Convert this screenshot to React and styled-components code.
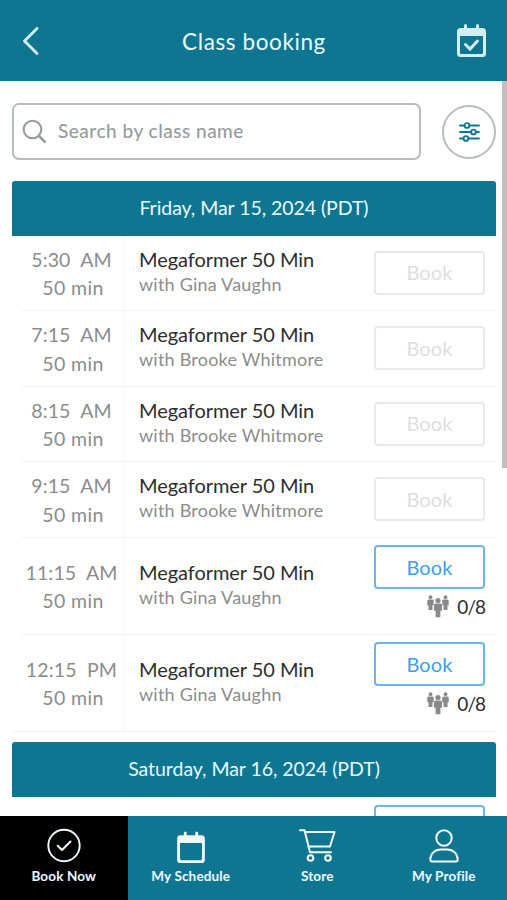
import styled, { createGlobalStyle } from "styled-components";

const GlobalStyle = createGlobalStyle`
  :root {
    --cl-teal: #0f7692;
    --cl-ice: #d3eff5;
    --cl-blue: #3d9fe6;
    --cl-light-blue: #6bb5ec;
    --cl-dark: #2d2d2d;
    --cl-gray: #8c8c8c;
    --cl-line: #eff2f3;
  }

  * {
    box-sizing: border-box;
  }

  body {
    margin: 0;
    background: #fff;
    font-family: Lato, "Open Sans", sans-serif;
    overflow: hidden;
  }
`;

const Screen = styled.div`
  position: relative;
  display: flex;
  flex-direction: column;
  height: 900px;
  overflow: hidden;
`;

const Header = styled.header`
  display: grid;
  grid-template-columns: 62px 1fr 62px;
  align-items: center;
  flex: none;
  height: 81px;
  padding-top: 1px;
  background: var(--cl-teal);
  color: var(--cl-ice);
`;

const HeaderButton = styled.button`
  display: flex;
  justify-content: ${(props) => (props.$end ? "flex-end" : "flex-start")};
  padding: ${(props) => (props.$end ? "0 21px 2px 0" : "0 0 0 22px")};
  border: 0;
  background: none;
  color: inherit;
`;

const Title = styled.h1`
  margin: 0;
  padding: 2px 0 0 1px;
  color: #e9fbff;
  font-size: 22.5px;
  font-weight: 400;
  letter-spacing: 0.6px;
  line-height: 28px;
  text-align: center;
`;

const Content = styled.main`
  flex: 1;
  min-height: 0;
  padding: 22px 11px 0 12px;
  overflow: hidden;
`;

const SearchBar = styled.div`
  display: flex;
  align-items: center;
  justify-content: space-between;
  height: 57px;
  margin-bottom: 21px;
`;

const SearchField = styled.label`
  display: flex;
  align-items: center;
  gap: 11px;
  width: 409px;
  height: 57px;
  padding: 0 8px;
  border: 2px solid #b7bcbd;
  border-radius: 7px;
  color: #969b9d;
`;

const SearchInput = styled.input`
  flex: 1;
  padding: 0 0 2px;
  border: 0;
  outline: 0;
  background: none;
  font-family: inherit;
  font-size: 19px;
  font-weight: 500;
  letter-spacing: 0.5px;

  &::placeholder {
    color: #969b9d;
    opacity: 1;
  }
`;

const FilterButton = styled.button`
  display: flex;
  align-items: center;
  justify-content: center;
  width: 54px;
  height: 54px;
  padding: 0;
  border: 2px solid #b7bcbd;
  border-radius: 50%;
  background: #fff;
  color: var(--cl-teal);
`;

const Day = styled.section`
  margin-bottom: 10.5px;
`;

const DayTitle = styled.h2`
  margin: 0;
  height: 54.5px;
  border-radius: 3px 3px 0 0;
  background: var(--cl-teal);
  color: #e9fbff;
  font-size: 19.5px;
  font-weight: 400;
  letter-spacing: -0.05px;
  line-height: 53px;
  text-align: center;
`;

const Row = styled.article`
  display: grid;
  grid-template-columns: 103px 1fr 122px;
  height: ${(props) => (props.$open ? "97px" : "75.5px")};
  margin-left: 10px;
  border-bottom: 1px solid var(--cl-line);

  &:last-child {
    margin-left: 0;
    padding-left: 10px;
  }
`;

const Time = styled.div`
  display: flex;
  flex-direction: column;
  justify-content: center;
  border-right: 1px solid #f4f7f8;
  padding: 3px 3px 0 0;
  color: var(--cl-gray);
  font-size: 19.5px;
  letter-spacing: 0.15px;
  line-height: 28.5px;
  text-align: center;
  white-space: pre;
`;

const Duration = styled.span`
  padding-left: 3px;
  letter-spacing: 0.35px;
`;

const Info = styled.div`
  display: flex;
  flex-direction: column;
  justify-content: center;
  padding: 0 0 2px 14px;
`;

const ClassName = styled.h3`
  margin: 0;
  color: var(--cl-dark);
  font-size: 20px;
  font-weight: 400;
  letter-spacing: -0.05px;
  line-height: 25px;
`;

const Instructor = styled.p`
  margin: 0;
  color: var(--cl-gray);
  font-size: 18px;
  letter-spacing: 0.22px;
  line-height: 25px;
`;

const Booking = styled.div`
  display: flex;
  flex-direction: column;
  align-items: flex-end;
  justify-content: center;
  padding: ${(props) => (props.$open ? "0 11px 3px 0" : "0 11px 0 0")};
`;

const BookButton = styled.button`
  flex: none;
  width: 111px;
  height: 44px;
  padding: 0 0 1px;
  border: 2px solid var(--cl-light-blue);
  border-radius: 4px;
  background: #fff;
  color: var(--cl-blue);
  font-family: inherit;
  font-size: 20px;
  letter-spacing: 0.15px;

  &:disabled {
    border-color: #e9e9e9;
    color: #dedede;
  }
`;

const Spots = styled.div`
  display: flex;
  align-items: center;
  gap: 8px;
  height: 34px;
  color: var(--cl-dark);
  font-size: 19px;
  letter-spacing: -1px;
`;

const ScrollThumb = styled.div`
  position: absolute;
  top: 81px;
  right: 0;
  width: 5px;
  height: 387px;
  background: #bfbfbf;
`;

const TabBar = styled.nav`
  display: grid;
  grid-template-columns: 127.5px 126.5px 126.5px 126.5px;
  flex: none;
  height: 84.5px;
  background: var(--cl-teal);
`;

const Tab = styled.button`
  display: flex;
  flex-direction: column;
  align-items: center;
  padding: 11px 0 0;
  border: 0;
  background: ${(props) => (props.$active ? "#000" : "none")};
  color: #f0fcff;
  font-family: inherit;
  font-size: 13.5px;
  font-weight: 700;
  letter-spacing: 0.15px;
  line-height: 20px;

  svg {
    margin-bottom: 3px;
  }
`;

const BackIcon = () => (
  <svg width="18" height="28" viewBox="0 0 18 28" fill="none">
    <path
      d="M15 1.5 2.5 14 15 26.5"
      stroke="currentColor"
      strokeWidth="2.9"
      strokeLinecap="round"
      strokeLinejoin="round"
    />
  </svg>
);

const CalendarIcon = ({ checked, width = 29, height = 33 }) => (
  <svg width={width} height={height} viewBox="0 0 29 33">
    <path
      d="M7 1.5a1.5 1.5 0 0 1 3 0V4h9V1.5a1.5 1.5 0 0 1 3 0V4h3.5A3.5 3.5 0 0 1 29 7.5v22a3.5 3.5 0 0 1-3.5 3.5h-22A3.5 3.5 0 0 1 0 29.5v-22A3.5 3.5 0 0 1 3.5 4H7ZM3 12v16.5A1.5 1.5 0 0 0 4.5 30h20a1.5 1.5 0 0 0 1.5-1.5V12Z"
      fill="currentColor"
      fillRule="evenodd"
    />
    {checked && (
      <path
        d="m8.5 20.500 4.500 4.500 7.500-8"
        fill="none"
        stroke="currentColor"
        strokeWidth="3"
        strokeLinecap="round"
      />
    )}
  </svg>
);

const SearchIcon = () => (
  <svg width="25" height="25" viewBox="0 0 25 25" fill="none">
    <circle cx="10.5" cy="10.5" r="8.8" stroke="currentColor" strokeWidth="2.1" />
    <path d="m17 17 6.500 6.500" stroke="currentColor" strokeWidth="2.5" />
  </svg>
);

const FilterIcon = () => (
  <svg width="21" height="20" viewBox="0 0 21 20" stroke="currentColor" strokeWidth="1.9">
    <path d="M1 3.500h19M1 10h19M1 16.500h19" strokeLinecap="round" />
    <g fill="#fff">
      <circle cx="8" cy="3.5" r="2.4" />
      <circle cx="14.5" cy="10" r="2.4" />
      <circle cx="7" cy="16.5" r="2.4" />
    </g>
  </svg>
);

const PeopleIcon = () => (
  <svg width="22" height="23" viewBox="0 0 22 23" fill="#898989">
    <circle cx="3.5" cy="2.2" r="1.9" />
    <path d="M1.500 4.500h4a1.200 1.200 0 0 1 1.200 1.200v4.500H5.500V15h-4v-4.800H.3V5.700a1.200 1.200 0 0 1 1.200-1.200Z" />
    <circle cx="18.5" cy="2.2" r="1.9" />
    <path d="M16.500 4.500h4a1.200 1.200 0 0 1 1.200 1.200v4.500h-1.200V15h-4v-4.800h-1.200V5.700a1.200 1.200 0 0 1 1.200-1.200Z" />
    <circle cx="11" cy="5.5" r="2.6" />
    <path d="M8.500 8.600h5A1.600 1.600 0 0 1 15 10.200v5.600h-1.600v5.700a.8.8 0 0 1-.8.8H9.400a.8.800 0 0 1-.8-.8v-5.700H7v-5.600a1.600 1.600 0 0 1 1.500-1.600Z" />
  </svg>
);

const CheckIcon = () => (
  <svg width="35" height="36" viewBox="0 0 35 36" fill="none" stroke="currentColor">
    <circle cx="18" cy="18.5" r="15.7" strokeWidth="1.9" />
    <path
      d="m11.700 18.700 4.300 4.300 8.500-8.500"
      strokeWidth="2"
      strokeLinecap="round"
      strokeLinejoin="round"
    />
  </svg>
);

const ScheduleIcon = () => (
  <svg width="36" height="36" viewBox="0 0 36 36">
    <g transform="translate(4 4.5)">
      <CalendarIcon width={28} height={31.5} />
    </g>
  </svg>
);

const CartIcon = () => (
  <svg
    width="38"
    height="36"
    viewBox="0 0 38 36"
    fill="none"
    stroke="currentColor"
    strokeWidth="2"
    strokeLinecap="round"
    strokeLinejoin="round"
  >
    <path d="M2 3.200h4.500l5.500 22H33" />
    <path d="M7 5h29.500l-4.500 14.500H10.500" />
    <circle cx="12.5" cy="31" r="2.8" />
    <circle cx="30" cy="31" r="2.8" />
  </svg>
);

const ProfileIcon = () => (
  <svg width="32" height="36" viewBox="0 0 32 36" fill="none" stroke="currentColor" strokeWidth="2">
    <circle cx="16" cy="11" r="7.7" />
    <path
      d="M4 34.500h24a1.700 1.700 0 0 0 1.700-1.700C29.700 26.800 25 22.500 19.500 22.500h-7C7 22.500 2.300 26.800 2.300 32.800A1.700 1.700 0 0 0 4 34.500Z"
      strokeLinejoin="round"
    />
  </svg>
);

const days = [
  {
    date: "Friday, Mar 15, 2024 (PDT)",
    classes: [
      { time: "5:30  AM", teacher: "Gina Vaughn" },
      { time: "7:15  AM", teacher: "Brooke Whitmore" },
      { time: "8:15  AM", teacher: "Brooke Whitmore" },
      { time: "9:15  AM", teacher: "Brooke Whitmore" },
      { time: "11:15  AM", teacher: "Gina Vaughn", spots: "0/8" },
      { time: "12:15  PM", teacher: "Gina Vaughn", spots: "0/8" },
    ],
  },
];

const tabs = [
  { label: "Book Now", Icon: CheckIcon, active: true },
  { label: "My Schedule", Icon: ScheduleIcon },
  { label: "Store", Icon: CartIcon },
  { label: "My Profile", Icon: ProfileIcon },
];

function ClassRow({ time, teacher, spots }) {
  return (
    <Row $open={Boolean(spots)}>
      <Time>
        <span>{time}</span>
        <Duration>50 min</Duration>
      </Time>
      <Info>
        <ClassName>Megaformer 50 Min</ClassName>
        <Instructor>with {teacher}</Instructor>
      </Info>
      <Booking $open={Boolean(spots)}>
        <BookButton disabled={!spots}>Book</BookButton>
        {spots && (
          <Spots>
            <PeopleIcon />
            {spots}
          </Spots>
        )}
      </Booking>
    </Row>
  );
}

const UpcomingRow = styled.div`
  display: flex;
  justify-content: flex-end;
  height: 97px;
  padding: 8px 11px 0 0;
`;

function App() {
  return (
    <>
      <GlobalStyle />
      <Screen>
        <Header>
          <HeaderButton aria-label="Back">
            <BackIcon />
          </HeaderButton>
          <Title>Class booking</Title>
          <HeaderButton $end aria-label="Calendar">
            <CalendarIcon checked />
          </HeaderButton>
        </Header>
        <Content>
          <SearchBar>
            <SearchField>
              <SearchIcon />
              <SearchInput placeholder="Search by class name" />
            </SearchField>
            <FilterButton aria-label="Filter">
              <FilterIcon />
            </FilterButton>
          </SearchBar>
          {days.map((day) => (
            <Day key={day.date}>
              <DayTitle>{day.date}</DayTitle>
              {day.classes.map((item) => (
                <ClassRow key={item.time} {...item} />
              ))}
            </Day>
          ))}
          <Day>
            <DayTitle>Saturday, Mar 16, 2024 (PDT)</DayTitle>
            <UpcomingRow>
              <BookButton aria-label="Book" />
            </UpcomingRow>
          </Day>
        </Content>
        <TabBar>
          {tabs.map(({ label, Icon, active }) => (
            <Tab key={label} $active={active}>
              <Icon />
              {label}
            </Tab>
          ))}
        </TabBar>
        <ScrollThumb />
      </Screen>
    </>
  );
}

export default App;
